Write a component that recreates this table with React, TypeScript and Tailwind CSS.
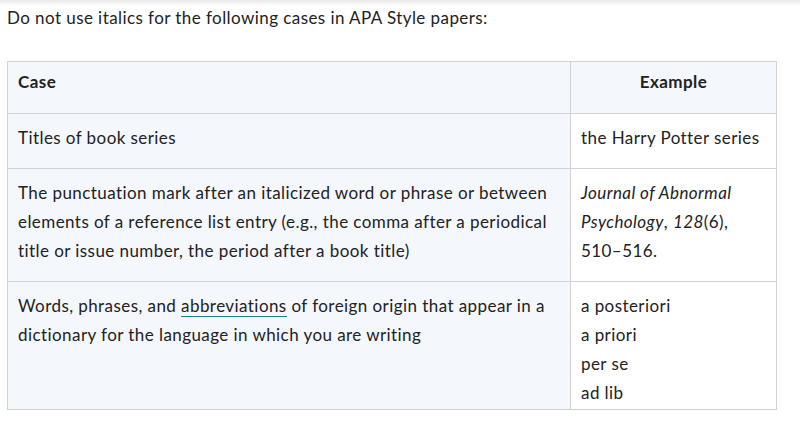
const rows = [
  {
    lines: ["Titles of book series"],
    example: <p className="mb-[16px]">the Harry Potter series</p>,
  },
  {
    lines: [
      "The punctuation mark after an italicized word or phrase or between",
      "elements of a reference list entry (e.g., the comma after a periodical",
      "title or issue number, the period after a book title)",
    ],
    example: (
      <p className="mb-[16px]">
        <i>Journal of Abnormal</i>
        <br />
        <i>Psychology</i>, <i>128</i>(6),
        <br />
        510–516.
      </p>
    ),
  },
];

export default function App() {
  return (
    <div className="min-h-[426px] bg-white text-[17px] leading-[29px] tracking-[0.43px] text-[#222222] font-['Lato','Liberation_Sans',sans-serif]">
      <div className="h-[6px] bg-gradient-to-b from-[#e9e9e9] to-white" />
      <p className="px-[7px] leading-[24px]">
        Do not use italics for the following cases in APA Style papers:
      </p>

      <table className="mt-[31px] ml-[7px] w-[770px] table-fixed border-collapse">
        <colgroup>
          <col className="w-[563px]" />
          <col className="w-[206px]" />
        </colgroup>
        <thead>
          <tr className="bg-[#f4f7fb]">
            <th className="h-[52px] border border-[#cfd3d8] px-[10px] pt-[5px] pb-[16px] text-left align-top font-bold">
              Case
            </th>
            <th className="border border-[#cfd3d8] px-[10px] pt-[5px] pb-[16px] text-center align-top font-bold">
              Example
            </th>
          </tr>
        </thead>
        <tbody>
          {rows.map((row, i) => (
            <tr key={i}>
              <td className="border border-[#cfd3d8] bg-[#f4f7fb] px-[10px] pt-[9px] align-top">
                <p className="mb-[16px]">
                  {row.lines.map((l, j) => (
                    <span key={j} className="block whitespace-nowrap">
                      {l}
                    </span>
                  ))}
                </p>
              </td>
              <td className="border border-[#cfd3d8] bg-white px-[10px] pt-[9px] align-top">
                {row.example}
              </td>
            </tr>
          ))}
          <tr>
            <td className="border border-[#cfd3d8] bg-[#f4f7fb] px-[10px] pt-[9px] align-top">
              <p>
                <span className="block whitespace-nowrap">
                  Words, phrases, and{" "}
                  <a className="border-b border-[#17838c]">abbreviations</a>{" "}
                  of foreign origin that appear in a
                </span>
                <span className="block whitespace-nowrap">dictionary for the language in which you are writing</span>
              </p>
            </td>
            <td className="border border-[#cfd3d8] bg-white px-[10px] pt-[9px] pb-[2px] align-top">
              <ul>
                <li>a posteriori</li>
                <li>a priori</li>
                <li>per se</li>
                <li>ad lib</li>
              </ul>
            </td>
          </tr>
        </tbody>
      </table>
    </div>
  );
}
